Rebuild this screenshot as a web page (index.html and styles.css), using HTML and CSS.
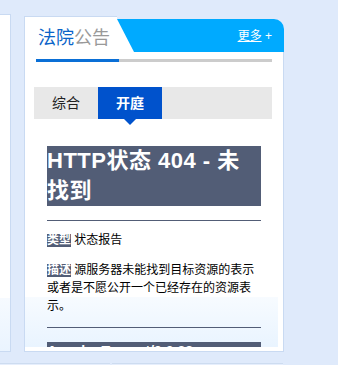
FILE: index.html
```html
<!DOCTYPE html>
<html lang="zh-CN">
<head>
    <meta charset="UTF-8">
    <meta name="viewport" content="width=device-width, initial-scale=1.0">
    <title>法院公告</title>
    <link rel="stylesheet" href="styles.css">
</head>
<body>
    <div class="page">
        <div class="side"></div>
        <div class="card">
            <div class="card-head">
                <div class="head-title"><span class="blue">法院</span>公告</div>
                <div class="slant"></div>
                <div class="head-bar"><a href="#" class="more">更多</a> +</div>
            </div>
            <div class="card-body">
                <div class="title-line"></div>
                <div class="tabs">
                    <div class="tab">综合</div>
                    <div class="tab active">开庭</div>
                </div>
                <div class="frame">
                    <div class="doc">
                        <h1>HTTP状态 404 - 未找到</h1>
                        <hr class="line">
                        <p><b>类型</b> 状态报告</p>
                        <p><b>描述</b> 源服务器未能找到目标资源的表示或者是不愿公开一个已经存在的资源表示。</p>
                        <hr class="line">
                        <h3>Apache Tomcat/9.0.38</h3>
                    </div>
                </div>
            </div>
        </div>
    </div>
    <div class="bottom">
        <div class="bottom-box small"></div>
        <div class="bottom-box wide"></div>
    </div>
</body>
</html>
```

FILE: styles.css
```css
* {
    margin: 0;
    padding: 0;
    box-sizing: border-box;
}
body {
    background: #dfeafb;
    font-family: "Liberation Sans", "Noto Sans CJK SC", sans-serif;
    color: #000;
}
.page {
    display: flex;
    gap: 13px;
    padding-top: 14px;
}
.side {
    width: 11px;
    height: 338px;
    background: linear-gradient(to bottom, #fff 0, #fff 283px, #f6faff 283px, #eaf4ff 100%);
    border: 1px solid #c9daf2;
    border-left: none;
}
.card {
    width: 260px;
    margin-top: 2px;
}
.card-head {
    display: flex;
    align-items: flex-end;
    height: 36px;
}
.head-title {
    width: 93px;
    height: 36px;
    background: #fff;
    border-top: 1px solid #c9daf2;
    border-left: 1px solid #c9daf2;
    padding: 11px 0 0 13px;
    font-size: 18px;
    line-height: 20px;
    color: #999;
    white-space: nowrap;
}
.head-title .blue {
    color: #0a64c8;
}
.slant {
    width: 0;
    height: 0;
    border-top: 33px solid #00aaff;
    border-left: 17px solid #fff;
}
.head-bar {
    flex: 1;
    height: 33px;
    background: #00aaff;
    border-top-right-radius: 10px;
    text-align: right;
    padding: 9px 12px 0 0;
    font-size: 12px;
    line-height: 16px;
    color: #fff;
}
.more {
    color: #fff;
    text-decoration: underline;
}
.card-body {
    background: #fff;
    border: 1px solid #c9daf2;
    border-top: none;
    padding: 7px 0 4px 0;
}
.title-line {
    height: 3px;
    margin: 0 11px;
    background: linear-gradient(to right, #0a6fd6 83px, #ccc 83px);
}
.tabs {
    display: flex;
    height: 32px;
    margin: 25px 11px 0 9px;
    background: #e8e8e8;
}
.tab {
    width: 64px;
    text-align: center;
    font-size: 14px;
    line-height: 32px;
    color: #222;
}
.tab.active {
    position: relative;
    background: #0052cc;
    color: #fff;
    font-weight: bold;
}
.tab.active::after {
    content: "";
    position: absolute;
    left: 26px;
    top: 32px;
    border-top: 6px solid #0052cc;
    border-left: 6px solid transparent;
    border-right: 6px solid transparent;
}
.frame {
    width: 253px;
    height: 228px;
    overflow: hidden;
    background: linear-gradient(to bottom, #fff 0, #fff 178px, #f7fbff 178px, #e9f4ff 100%);
}
.doc {
    padding: 27px 17px 0 22px;
}
.doc h1 {
    background: #525d76;
    color: #fff;
    font-size: 22px;
    line-height: 30px;
    font-weight: bold;
    letter-spacing: 0.5px;
    margin-bottom: 14px;
}
.line {
    height: 1px;
    border: none;
    background: #525d76;
    margin: 0;
}
.doc p {
    font-size: 12px;
    line-height: 18px;
    margin: 10px 0 12px;
}
.doc p b {
    display: inline-block;
    line-height: 13px;
    background: #525d76;
    color: #fff;
    font-weight: bold;
}
.doc p + p {
    margin-top: 0;
}
.doc .line + h3 {
    margin-top: 14px;
}
.doc h3 {
    background: #525d76;
    color: #fff;
    font-size: 14px;
    line-height: 18px;
    font-weight: bold;
}
.bottom {
    display: flex;
    gap: 2px;
    margin-top: 11px;
}
.bottom-box {
    height: 20px;
    background: #e6eefc;
    border-top: 1px solid #cddcf0;
}
.bottom-box.small {
    width: 110px;
}
.bottom-box.wide {
    width: 171px;
}
```
